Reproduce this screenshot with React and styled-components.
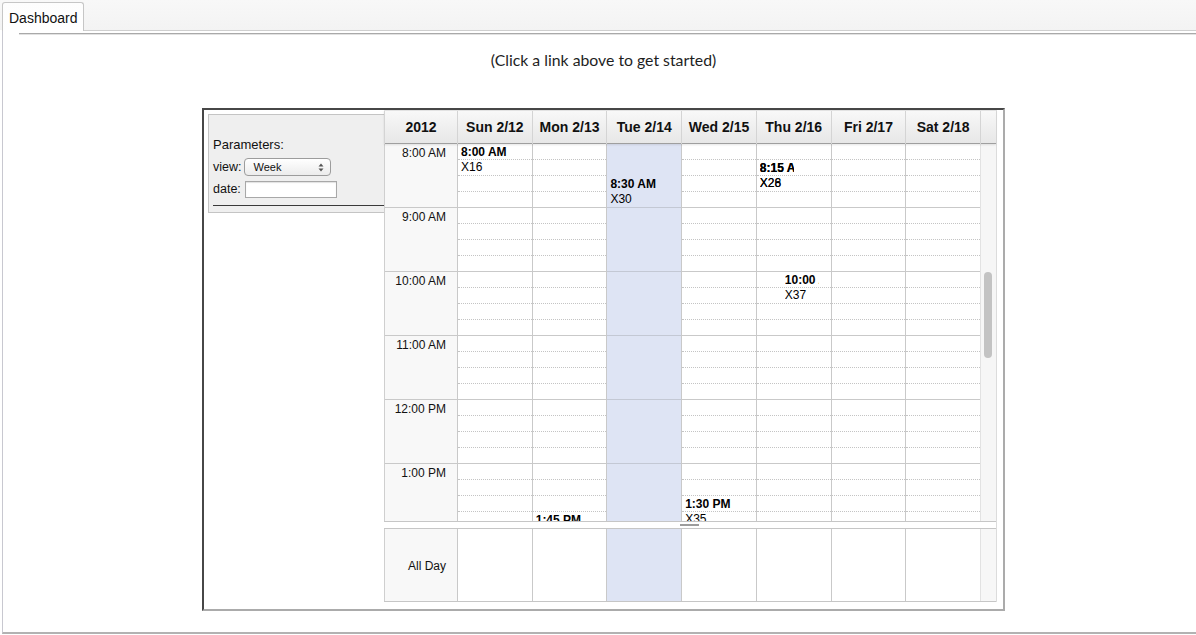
import React from "react";
import styled, { createGlobalStyle } from "styled-components";

const GlobalStyle = createGlobalStyle`
  html, body { margin: 0; padding: 0; background: #ffffff; }
  body { font-family: "Liberation Sans", Arial, sans-serif; color: #111; }
  * { box-sizing: border-box; }
`;

const TopBar = styled.div`
  height: 30px;
  padding-left: 2px;
  display: flex;
  align-items: flex-end;
  background: linear-gradient(#f8f8f8, #f3f3f3);
`;

const Tab = styled.div`
  position: relative;
  z-index: 1;
  width: 82px;
  height: 29px;
  margin-bottom: -1px;
  padding-left: 6px;
  border: 1px solid #c6c6c6;
  border-bottom: none;
  border-radius: 3px 3px 0 0;
  background: linear-gradient(#fdfdfd, #ffffff);
  font-size: 14px;
  line-height: 30px;
  color: #111;
  white-space: nowrap;
`;

const Panel = styled.div`
  margin-left: 2px;
  height: 604px;
  border-top: 1px solid #cfcfcf;
  border-left: 1px solid #c8c8d0;
  border-bottom: 2px solid #b2b2b2;
`;

const Rule = styled.div`
  margin: 2px 0 0 16px;
  height: 2px;
  border-top: 1px solid #a9a9a9;
  border-bottom: 1px solid #e2e2e2;
`;

const Content = styled.div`
  padding-left: 8px;
  display: flex;
  flex-direction: column;
  align-items: center;
`;

const Message = styled.div`
  margin-top: 15px;
  font-family: Lato, "Open Sans", sans-serif;
  font-size: 15.8px;
  line-height: 20px;
  color: #1e1e1e;
`;

const Frame = styled.div`
  margin-top: 38px;
  width: 803px;
  height: 503px;
  display: flex;
  align-items: flex-start;
  border: 2px solid;
  border-color: #474747 #ababab #ababab #474747;
`;

const LeftPanel = styled.div`
  width: 180px;
  padding: 4px 0 0 4px;
`;

const ParamBox = styled.div`
  height: 99px;
  padding: 22px 0 0 4px;
  background: #efefef;
  border: 1px solid #c4c4c4;
  border-right: none;
  display: flex;
  flex-direction: column;
  font-size: 12.5px;
`;

const ParamTitle = styled.div`
  line-height: 15px;
  font-size: 13px;
`;

const ParamRow = styled.div`
  height: 22px;
  display: flex;
  align-items: center;
  gap: 3px;
  margin-top: ${(p) => p.$mt || 0}px;
`;

const ParamLabel = styled.span`
  line-height: 15px;
`;

const FakeSelect = styled.div`
  width: 87px;
  height: 18px;
  padding: 0 6px 0 8px;
  border: 1px solid #9c9c9c;
  border-radius: 4px;
  background: linear-gradient(#ffffff, #ececec);
  font-size: 11px;
  line-height: 16px;
  color: #111;
  display: flex;
  align-items: center;
  justify-content: space-between;
`;

const DateInput = styled.input`
  width: 92px;
  height: 17px;
  margin-left: 1px;
  border: 1px solid #a8a8a8;
  box-shadow: inset 0 1px 1px rgba(0, 0, 0, 0.12);
  background: #fff;
  padding: 0 3px;
  font-size: 11px;
`;

const Divider = styled.div`
  margin-top: 5px;
  border-top: 1px solid #3a3a3a;
`;

const Calendar = styled.div`
  width: 613px;
  height: 492px;
  display: flex;
  flex-direction: column;
  border-right: 1px solid #dcdcdc;
`;

const cols = `73px repeat(7, 1fr) 16px`;

const Header = styled.div`
  height: 34px;
  display: grid;
  grid-template-columns: ${cols};
  background: linear-gradient(#f8f8f8, #e7e7e7);
  border-top: 1px solid #e2e2e2;
  border-bottom: 1px solid #9f9f9f;
  box-shadow: 0 1px 2px rgba(0, 0, 0, 0.1);
  position: relative;
  z-index: 1;
`;

const HeaderCell = styled.div`
  border-left: 1px solid #d4d4d4;
  font-size: 14px;
  font-weight: bold;
  line-height: 33px;
  text-align: center;
  color: #111;
  white-space: nowrap;
`;

const Body = styled.div`
  height: 378px;
  overflow: hidden;
  display: grid;
  grid-template-columns: ${cols};
  border-bottom: 1px solid #c6c6c6;
`;

const TimeColumn = styled.div`
  background: #f8f8f8;
  border-left: 1px solid #cfcfcf;
`;

const TimeCell = styled.div`
  height: 64px;
  padding: 2px 11px 0 0;
  border-bottom: 1px solid #c9c9c9;
  text-align: right;
  font-size: 12px;
  line-height: 14px;
  color: #111;
`;

const DayColumn = styled.div`
  position: relative;
  border-left: 1px solid #c9c9c9;
  background: ${(p) => (p.$today ? "#dee4f4" : "#ffffff")};
`;

const Quarter = styled.div`
  height: 16px;
  border-bottom: 1px ${(p) => (p.$hour ? "solid" : "dotted")}
    ${(p) =>
      p.$hour
        ? p.$today
          ? "#c3c8d4"
          : "#c9c9c9"
        : p.$today
        ? "transparent"
        : "#c4c4c4"};
`;

const Event = styled.div`
  position: absolute;
  overflow: hidden;
  white-space: nowrap;
  padding-top: 1px;
  font-size: 12px;
  line-height: 15px;
  color: #000;
`;

const EventTitle = styled.div`
  font-weight: bold;
`;

const ScrollTrack = styled.div`
  background: #f6f6f6;
  border-left: 1px solid #e2e2e2;
  padding-left: 3px;
`;

const ScrollThumb = styled.div`
  margin-top: 128px;
  width: 8px;
  height: 86px;
  border-radius: 4px;
  background: #c3c3c3;
`;

const Splitter = styled.div`
  height: 6px;
  padding-top: 2px;
  background: #fff;
`;

const SplitHandle = styled.div`
  margin-left: 296px;
  width: 19px;
  height: 2px;
  background: #9c9c9c;
`;

const AllDayRow = styled.div`
  height: 74px;
  display: grid;
  grid-template-columns: ${cols};
  border-top: 1px solid #c6c6c6;
  border-bottom: 1px solid #c6c6c6;
`;

const AllDayLabel = styled.div`
  background: #f8f8f8;
  border-left: 1px solid #cfcfcf;
  padding: 2px 11px 0 0;
  display: flex;
  align-items: center;
  justify-content: flex-end;
  font-size: 12px;
  color: #111;
`;

const AllDayCell = styled.div`
  border-left: 1px solid #c9c9c9;
  background: ${(p) => (p.$today ? "#dee4f4" : "#ffffff")};
`;

const AllDayScroll = styled.div`
  background: #f7f7f7;
  border-left: 1px solid #e2e2e2;
`;

const hours = ["8:00 AM", "9:00 AM", "10:00 AM", "11:00 AM", "12:00 PM", "1:00 PM"];
const days = ["Sun 2/12", "Mon 2/13", "Tue 2/14", "Wed 2/15", "Thu 2/16", "Fri 2/17", "Sat 2/18"];
const TODAY = 2;

const events = {
  0: [{ min: 0, title: "8:00 AM", text: "X16", left: 3, width: 68 }],
  1: [{ min: 345, title: "1:45 PM", left: 3, width: 68 }],
  2: [{ min: 30, title: "8:30 AM", text: "X30", left: 3, width: 68 }],
  3: [{ min: 330, title: "1:30 PM", text: "X35", left: 3, width: 68 }],
  4: [
    { min: 15, title: "8:15 AM", text: "X28", left: 3, width: 34 },
    { min: 15, title: "8:15 AM", text: "X26", left: 3, width: 34 },
    { min: 120, title: "10:00 AM", text: "X37", left: 28, width: 34 },
  ],
};

const SelectArrows = () => (
  <svg width="6" height="9" viewBox="0 0 6 9">
    <path d="M3 0.5 L5.5 3.5 H0.5 Z" fill="#555" />
    <path d="M3 8.5 L5.5 5.5 H0.5 Z" fill="#555" />
  </svg>
);

export default function App() {
  return (
    <>
      <GlobalStyle />
      <TopBar>
        <Tab>Dashboard</Tab>
      </TopBar>
      <Panel>
        <Rule />
        <Content>
          <Message>(Click a link above to get started)</Message>
          <Frame>
            <LeftPanel>
              <ParamBox>
                <ParamTitle>Parameters:</ParamTitle>
                <ParamRow $mt={4}>
                  <ParamLabel>view:</ParamLabel>
                  <FakeSelect>
                    <span>Week</span>
                    <SelectArrows />
                  </FakeSelect>
                </ParamRow>
                <ParamRow>
                  <ParamLabel>date:</ParamLabel>
                  <DateInput type="text" defaultValue="" />
                </ParamRow>
                <Divider />
              </ParamBox>
            </LeftPanel>
            <Calendar>
              <Header>
                <HeaderCell>2012</HeaderCell>
                {days.map((d) => (
                  <HeaderCell key={d}>{d}</HeaderCell>
                ))}
                <HeaderCell />
              </Header>
              <Body>
                <TimeColumn>
                  {hours.map((h) => (
                    <TimeCell key={h}>{h}</TimeCell>
                  ))}
                </TimeColumn>
                {days.map((d, i) => (
                  <DayColumn key={d} $today={i === TODAY}>
                    {hours.map((h) => (
                      <div key={h}>
                        {[0, 1, 2, 3].map((q) => (
                          <Quarter key={q} $hour={q === 3} $today={i === TODAY} />
                        ))}
                      </div>
                    ))}
                    {(events[i] || []).map((ev, k) => (
                      <Event
                        key={k}
                        style={{ top: (ev.min * 64) / 60, left: ev.left, width: ev.width }}
                      >
                        <EventTitle>{ev.title}</EventTitle>
                        {ev.text && <div>{ev.text}</div>}
                      </Event>
                    ))}
                  </DayColumn>
                ))}
                <ScrollTrack>
                  <ScrollThumb />
                </ScrollTrack>
              </Body>
              <Splitter>
                <SplitHandle />
              </Splitter>
              <AllDayRow>
                <AllDayLabel>All Day</AllDayLabel>
                {days.map((d, i) => (
                  <AllDayCell key={d} $today={i === TODAY} />
                ))}
                <AllDayScroll />
              </AllDayRow>
            </Calendar>
          </Frame>
        </Content>
      </Panel>
    </>
  );
}
